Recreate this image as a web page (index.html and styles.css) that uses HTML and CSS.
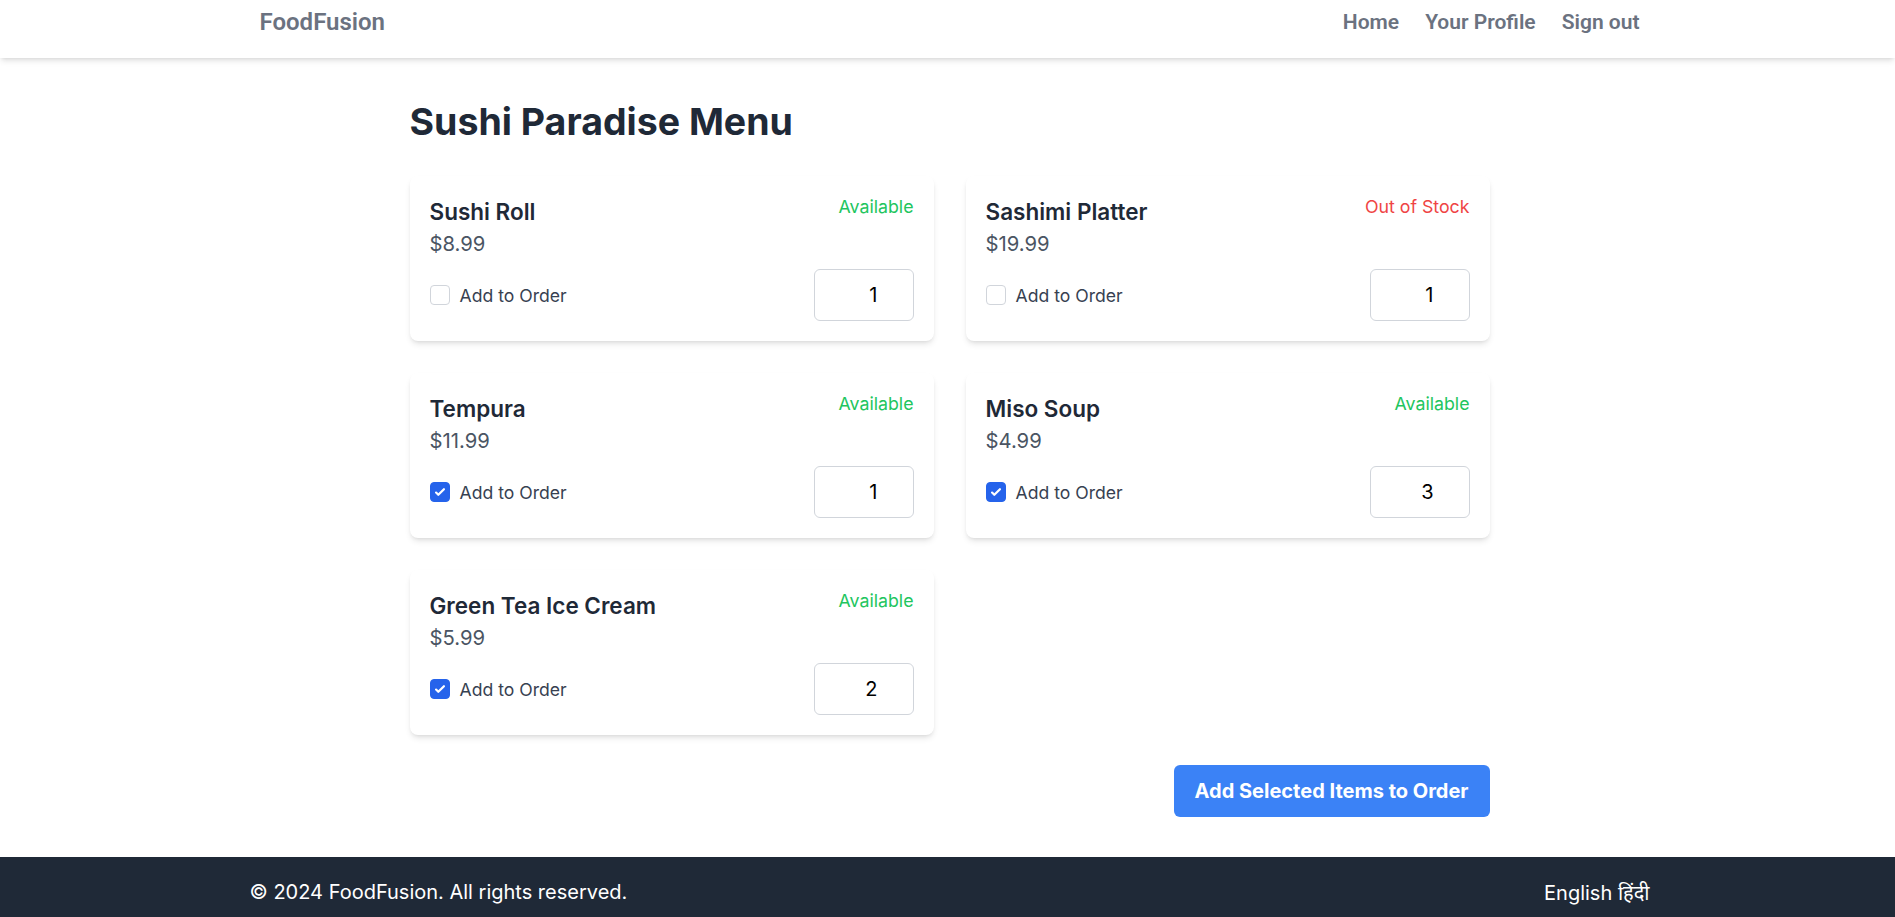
FILE: index.html
```html
<!DOCTYPE html>
<html lang="en">
<head>
<meta charset="utf-8">
<title>Sushi Paradise Menu - FoodFusion</title>
<link rel="stylesheet" href="styles.css">
</head>
<body>
<nav class="navbar">
  <div class="nav-inner">
    <a class="brand" href="#">FoodFusion</a>
    <div class="nav-links">
      <a href="#">Home</a>
      <a href="#">Your Profile</a>
      <a href="#">Sign out</a>
    </div>
  </div>
</nav>

<main class="menu">
  <h1 class="menu-title">Sushi Paradise Menu</h1>
  <div class="menu-grid">
    <div class="card">
      <div class="card-head">
        <div>
          <h3 class="item-name">Sushi Roll</h3>
          <p class="item-price">$8.99</p>
        </div>
        <span class="status ok">Available</span>
      </div>
      <div class="card-row">
        <label class="add"><input type="checkbox" class="check"><span>Add to Order</span></label>
        <input type="number" class="qty" value="1" min="1">
      </div>
    </div>
    <div class="card">
      <div class="card-head">
        <div>
          <h3 class="item-name">Sashimi Platter</h3>
          <p class="item-price">$19.99</p>
        </div>
        <span class="status out">Out of Stock</span>
      </div>
      <div class="card-row">
        <label class="add"><input type="checkbox" class="check"><span>Add to Order</span></label>
        <input type="number" class="qty" value="1" min="1">
      </div>
    </div>
    <div class="card">
      <div class="card-head">
        <div>
          <h3 class="item-name">Tempura</h3>
          <p class="item-price">$11.99</p>
        </div>
        <span class="status ok">Available</span>
      </div>
      <div class="card-row">
        <label class="add"><input type="checkbox" class="check" checked><span>Add to Order</span></label>
        <input type="number" class="qty" value="1" min="1">
      </div>
    </div>
    <div class="card">
      <div class="card-head">
        <div>
          <h3 class="item-name">Miso Soup</h3>
          <p class="item-price">$4.99</p>
        </div>
        <span class="status ok">Available</span>
      </div>
      <div class="card-row">
        <label class="add"><input type="checkbox" class="check" checked><span>Add to Order</span></label>
        <input type="number" class="qty" value="3" min="1">
      </div>
    </div>
    <div class="card">
      <div class="card-head">
        <div>
          <h3 class="item-name">Green Tea Ice Cream</h3>
          <p class="item-price">$5.99</p>
        </div>
        <span class="status ok">Available</span>
      </div>
      <div class="card-row">
        <label class="add"><input type="checkbox" class="check" checked><span>Add to Order</span></label>
        <input type="number" class="qty" value="2" min="1">
      </div>
    </div>
  </div>
  <div class="actions">
    <button class="order-btn" type="button">Add Selected Items to Order</button>
  </div>
</main>

<footer class="footer">
  <div class="footer-inner">
    <p class="copy">© 2024 FoodFusion. All rights reserved.</p>
    <div class="lang"><span>English</span> <span class="hi">हिंदी</span></div>
  </div>
</footer>
</body>
</html>
```

FILE: styles.css
```css
* { box-sizing: border-box; }

html, body {
  margin: 0;
  padding: 0;
}

body {
  font-family: Inter, "Noto Sans", "Liberation Sans", sans-serif;
  background: #ffffff;
  color: #1f2937;
}

a { text-decoration: none; color: inherit; }

/* Navbar */
.navbar {
  height: 58px;
  background: #ffffff;
  box-shadow: 0 4px 6px -1px rgba(0,0,0,0.1), 0 2px 4px -2px rgba(0,0,0,0.1);
  position: relative;
  z-index: 2;
}

.nav-inner {
  width: 1380px;
  margin-left: calc((100% - 1380px) / 2 + 2px);
  padding-top: 8px;
  display: flex;
  justify-content: space-between;
  align-items: center;
  font-family: Roboto, "Liberation Sans", sans-serif;
  font-weight: 600;
  color: #6b7280;
  line-height: 28px;
}

.brand {
  font-size: 24px;
}

.nav-links {
  display: flex;
  gap: 26px;
  font-size: 21px;
}

/* Main */
.menu {
  width: 1080px;
  margin-left: calc((100% - 1080px) / 2 + 2px);
  padding-top: 44px;
  padding-bottom: 40px;
}

.menu-title {
  margin: 0 0 34px 0;
  font-size: 37.5px;
  line-height: 40px;
  font-weight: 700;
  color: #1f2937;
}

.menu-grid {
  display: grid;
  grid-template-columns: 1fr 1fr;
  gap: 32px;
}

.card {
  background: #ffffff;
  border-radius: 8px;
  padding: 20px;
  box-shadow: 0 4px 6px -1px rgba(0,0,0,0.1), 0 2px 4px -2px rgba(0,0,0,0.1);
}

.card-head {
  display: flex;
  justify-content: space-between;
  align-items: flex-start;
}

.item-name {
  margin: 1px 0 3px 0;
  font-size: 22.5px;
  line-height: 30px;
  font-weight: 600;
  color: #1f2937;
}

.item-price {
  margin: 0;
  font-size: 20.25px;
  line-height: 28px;
  color: #4b5563;
}

.status {
  font-size: 17.75px;
  line-height: 26px;
  margin-top: -2px;
}

.status.ok { color: #22c55e; }
.status.out { color: #ef4444; }

.card-row {
  margin-top: 11px;
  display: flex;
  justify-content: space-between;
  align-items: center;
}

.add {
  display: flex;
  align-items: center;
  gap: 10px;
  font-size: 17.6px;
  color: #374151;
}

.check {
  -webkit-appearance: none;
  appearance: none;
  margin: 0;
  width: 20px;
  height: 20px;
  border: 1px solid #d1d5db;
  border-radius: 4px;
  background: #ffffff;
}

.check:checked {
  background-color: #2563eb;
  border-color: #2563eb;
  background-image: url("data:image/svg+xml,%3csvg viewBox='0 0 16 16' fill='white' xmlns='http://www.w3.org/2000/svg'%3e%3cpath d='M12.207 4.793a1 1 0 010 1.414l-5 5a1 1 0 01-1.414 0l-2-2a1 1 0 011.414-1.414L6.5 9.086l4.293-4.293a1 1 0 011.414 0z'/%3e%3c/svg%3e");
  background-size: 100% 100%;
  background-position: center;
}

.qty {
  width: 100px;
  height: 52px;
  border: 1px solid #d1d5db;
  border-radius: 6px;
  padding: 0 35px 0 12px;
  text-align: right;
  font-family: Inter, "Liberation Sans", sans-serif;
  font-size: 20px;
  color: #000000;
  background: #ffffff;
  -moz-appearance: textfield;
}

.qty::-webkit-inner-spin-button,
.qty::-webkit-outer-spin-button {
  -webkit-appearance: none;
  margin: 0;
}

.actions {
  margin-top: 30px;
  display: flex;
  justify-content: flex-end;
}

.order-btn {
  height: 52px;
  padding: 0 21px;
  border: none;
  border-radius: 6px;
  background: #3b82f6;
  color: #ffffff;
  font-family: Inter, "Liberation Sans", sans-serif;
  font-size: 20px;
  font-weight: 700;
}

/* Footer */
.footer {
  background: #1f2937;
  color: #ffffff;
  height: 70px;
}

.footer-inner {
  width: 1400px;
  margin-left: calc((100% - 1400px) / 2 + 2px);
  height: 70px;
  display: flex;
  justify-content: space-between;
  align-items: center;
  font-size: 20px;
}

.copy { margin: 0; }

.lang .hi {
  font-family: "Noto Sans", "Noto Sans Devanagari", sans-serif;
}
```
